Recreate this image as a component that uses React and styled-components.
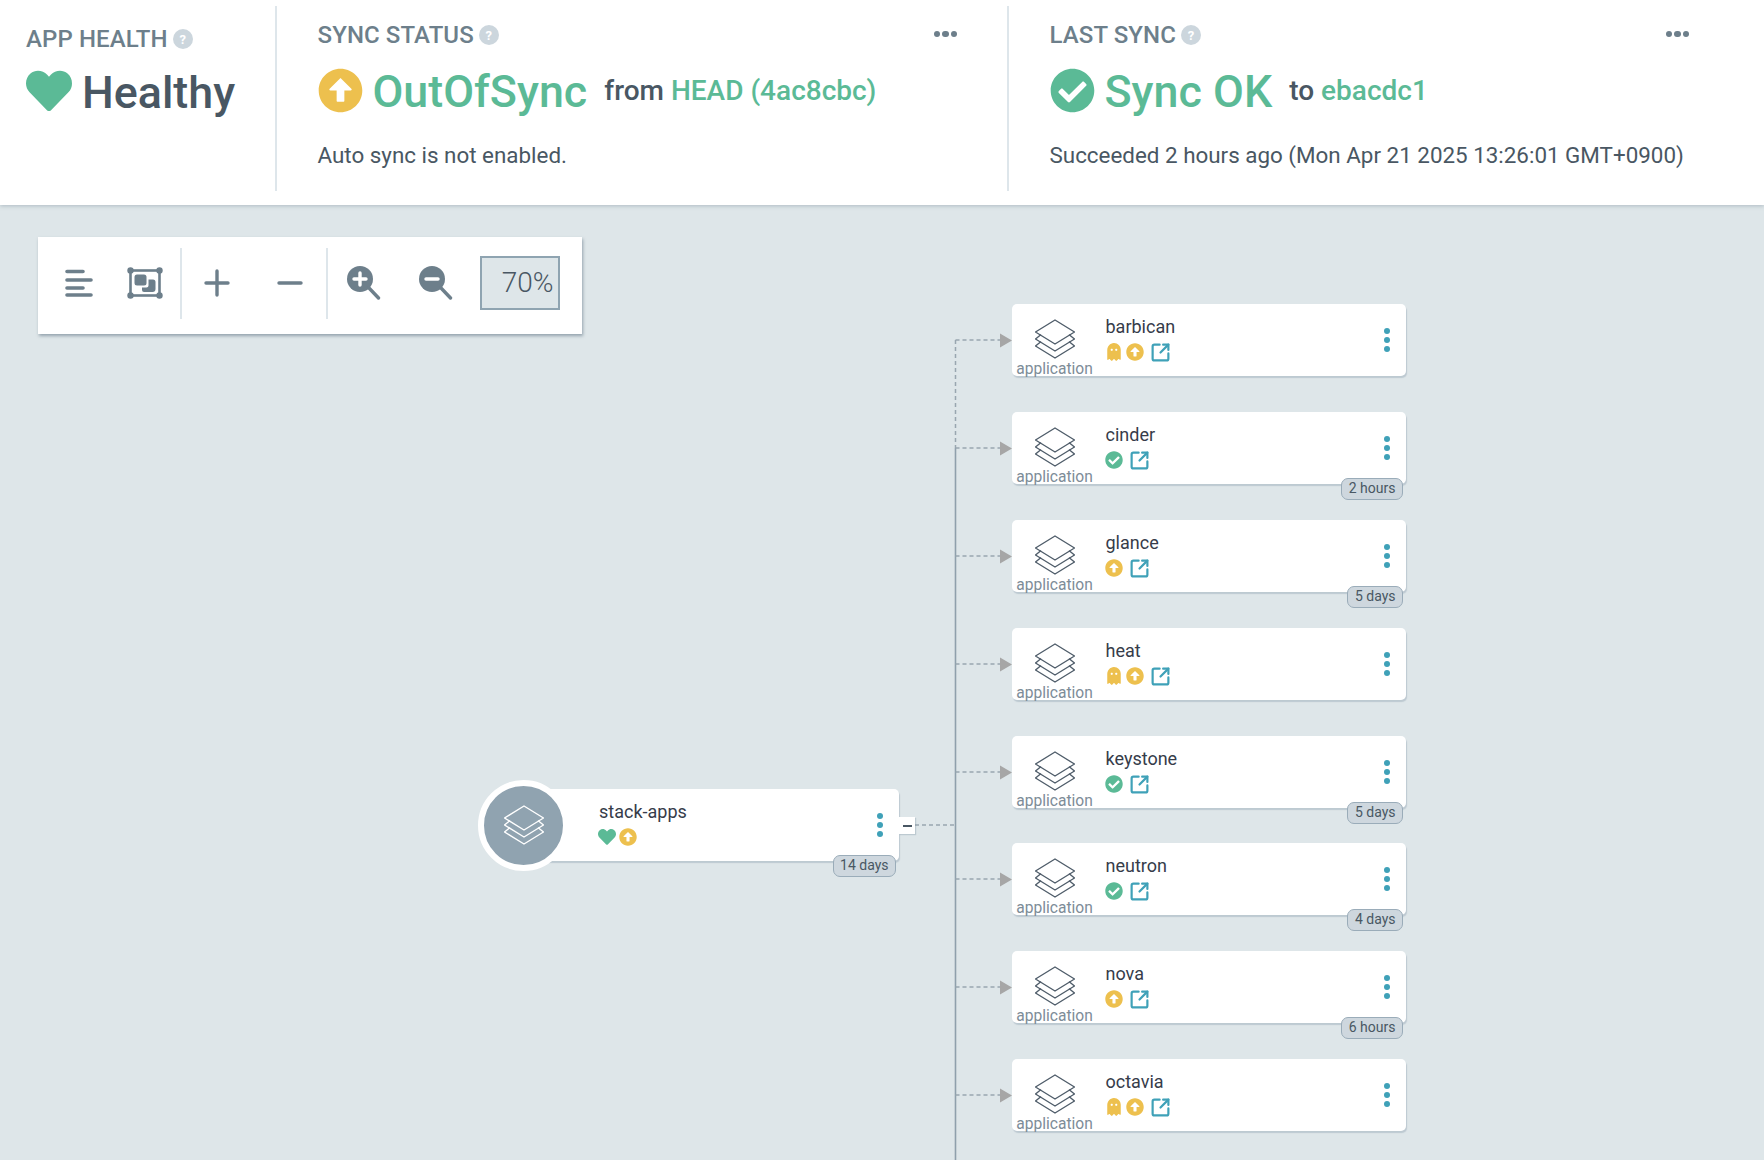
import React from 'react';
import styled, { createGlobalStyle } from 'styled-components';
import { FaHeart, FaArrowAltCircleUp, FaCheckCircle, FaGhost } from 'react-icons/fa';
import { SquareArrowOutUpRight } from 'lucide-react';

const GREEN = '#5bba96';
const YELLOW = '#edc04e';
const SLATE = '#495763';
const MUTED = '#6d7f8b';
const TEAL = '#3fa1b8';
const CANVAS = '#dee6e9';

const GlobalStyle = createGlobalStyle`
    html, body {
        margin: 0;
        padding: 0;
        height: 100%;
        overflow: hidden;
        background: ${CANVAS};
        font-family: Roboto, "Liberation Sans", sans-serif;
    }
    #root { height: 100%; }
`;

// node rows on the graph, tops are relative to the canvas
const APPS = [
    {name: 'barbican', top: 99, ghost: true, status: 'up'},
    {name: 'cinder', top: 207, status: 'ok', age: '2 hours'},
    {name: 'glance', top: 315, status: 'up', age: '5 days'},
    {name: 'heat', top: 423, ghost: true, status: 'up'},
    {name: 'keystone', top: 531, status: 'ok', age: '5 days'},
    {name: 'neutron', top: 638, status: 'ok', age: '4 days'},
    {name: 'nova', top: 746, status: 'up', age: '6 hours'},
    {name: 'octavia', top: 854, ghost: true, status: 'up'}
];

const StackIcon = ({color = '#4f5d6a', size = 40}) => (
    <svg width={size} height={size} viewBox="0 0 40 40" fill="none" stroke={color} strokeWidth="1.4" strokeLinejoin="round" strokeLinecap="round">
        <path d="M20 1 L39.5 13 L20 25 L.5 13 Z" />
        <path d="M5.5 16 L.5 20 L20 32 L39.5 20 L34.5 16" />
        <path d="M5.5 23 L.5 27 L20 39 L39.5 27 L34.5 23" />
    </svg>
);

const AlignIcon = () => (
    <svg width="28" height="28" viewBox="0 0 28 28" stroke={MUTED} strokeWidth="3.6" strokeLinecap="round">
        <path d="M2 2.5 H18 M2 11 H26 M2 19 H18 M2 26 H26" />
    </svg>
);

const FitIcon = () => (
    <svg width="36" height="32" viewBox="0 0 36 32" fill={MUTED}>
        <rect x="3.5" y="3.5" width="29" height="25" fill="none" stroke={MUTED} strokeWidth="2.6" />
        <circle cx="3.5" cy="3.5" r="3.2" />
        <circle cx="32.5" cy="3.5" r="3.2" />
        <circle cx="3.5" cy="28.5" r="3.2" />
        <circle cx="32.5" cy="28.5" r="3.2" />
        <rect x="7.5" y="7.5" width="12" height="11" rx="2.5" />
        <path d="M21.5 12.5 H26 Q28.5 12.5 28.5 15 V22 Q28.5 25 25.5 25 H17 Q15 25 15 23 V20.5 H19.5 Q21.5 20.5 21.5 18.5 Z" />
    </svg>
);

const PlusIcon = () => (
    <svg width="26" height="28" viewBox="0 0 26 28" stroke={MUTED} strokeWidth="3.4" strokeLinecap="round">
        <path d="M2 14 H24 M13 2 V26" />
    </svg>
);

const MinusIcon = () => (
    <svg width="26" height="28" viewBox="0 0 26 28" stroke={MUTED} strokeWidth="3.4" strokeLinecap="round">
        <path d="M2 14 H24" />
    </svg>
);

const ZoomIcon = ({plus}) => (
    <svg width="34" height="34" viewBox="0 0 34 34">
        <circle cx="13" cy="13" r="13" fill={MUTED} />
        <path d="M22 22 L31.5 32" stroke={MUTED} strokeWidth="3.4" strokeLinecap="round" />
        <path d={plus ? 'M7 13 H19 M13 7 V19' : 'M7 13 H19'} stroke="#fff" strokeWidth="3.4" strokeLinecap="round" />
    </svg>
);

const HelpBadge = () => <Help>?</Help>;

const Kebab = () => (
    <KebabWrap>
        <Dot />
        <Dot />
        <Dot />
    </KebabWrap>
);

const StatusIcon = ({status}) => (status === 'up'
    ? <FaArrowAltCircleUp size={18} color={YELLOW} />
    : <FaCheckCircle size={18} color={GREEN} />);

const AppNode = ({name, top, ghost, status, age}) => (
    <NodeCard style={{top}}>
        <TypeCol>
            <StackIcon />
            <TypeLabel>application</TypeLabel>
        </TypeCol>
        <NodeBody>
            <NodeName>{name}</NodeName>
            <NodeStatus>
                {ghost && <FaGhost size={18} color={YELLOW} />}
                <StatusIcon status={status} />
                <LinkIcon><SquareArrowOutUpRight size={21} strokeWidth={2.5} color={TEAL} /></LinkIcon>
            </NodeStatus>
        </NodeBody>
        <Kebab />
        {age && <AgeBadge>{age}</AgeBadge>}
    </NodeCard>
);

const Edges = () => (
    <EdgeLayer width="1764" height="955" viewBox="0 0 1764 955" fill="none">
        <path d="M955.5 243 V955" stroke="#8fa0ac" strokeWidth="1.6" />
        <path d="M955.5 135 V243" stroke="#99a6b0" strokeWidth="1.5" strokeDasharray="4 3" />
        <path d="M915 620 H955" stroke="#99a6b0" strokeWidth="1.5" strokeDasharray="4 3" />
        {APPS.map(app => (
            <g key={app.name}>
                <path d={`M955.5 ${app.top + 36} H1001`} stroke="#99a6b0" strokeWidth="1.5" strokeDasharray="4 3" />
                <path d={`M1000 ${app.top + 29.5} L1012 ${app.top + 36.5} L1000 ${app.top + 43.5} Z`} fill="#a6a6a6" />
            </g>
        ))}
    </EdgeLayer>
);

const App = () => (
    <Page>
        <GlobalStyle />
        <Header>
            <HealthSection>
                <LabelRow>
                    <Label>APP HEALTH <HelpBadge /></Label>
                </LabelRow>
                <BigRow $top={9}>
                    <FaHeart size={46} color={GREEN} />
                    <BigText>Healthy</BigText>
                </BigRow>
            </HealthSection>
            <Section $right={50}>
                <LabelRow>
                    <Label>SYNC STATUS <HelpBadge /></Label>
                    <MoreDots><i /><i /><i /></MoreDots>
                </LabelRow>
                <BigRow>
                    <FaArrowAltCircleUp size={45} color={YELLOW} />
                    <BigText $green>OutOfSync</BigText>
                    <Extra>from <Accent>HEAD (4ac8cbc)</Accent></Extra>
                </BigRow>
                <Desc>Auto sync is not enabled.</Desc>
            </Section>
            <Section $right={75} $grow>
                <LabelRow>
                    <Label>LAST SYNC <HelpBadge /></Label>
                    <MoreDots><i /><i /><i /></MoreDots>
                </LabelRow>
                <BigRow>
                    <FaCheckCircle size={45} color={GREEN} />
                    <BigText $green>Sync OK</BigText>
                    <Extra>to <Accent>ebacdc1</Accent></Extra>
                </BigRow>
                <Desc>Succeeded 2 hours ago (Mon Apr 21 2025 13:26:01 GMT+0900)</Desc>
            </Section>
        </Header>
        <Canvas>
            <Toolbar>
                <ToolButton $w={66}><AlignIcon /></ToolButton>
                <ToolButton $w={66}><FitIcon /></ToolButton>
                <ToolDivider />
                <ToolButton $w={71.5} $nudge={1}><PlusIcon /></ToolButton>
                <ToolButton $w={71.5} $nudge={4}><MinusIcon /></ToolButton>
                <ToolDivider />
                <ToolButton $nudge={2}><ZoomIcon plus /></ToolButton>
                <ToolButton $nudge={2}><ZoomIcon /></ToolButton>
                <ZoomValue>70%</ZoomValue>
            </Toolbar>
            <Edges />
            <RootNode>
                <RootCircle><StackIcon color="#fff" size={40} /></RootCircle>
                <RootBody>
                    <NodeName>stack-apps</NodeName>
                    <NodeStatus>
                        <FaHeart size={18} color={GREEN} />
                        <StatusIcon status="up" />
                    </NodeStatus>
                </RootBody>
                <Kebab />
                <AgeBadge>14 days</AgeBadge>
                <Collapse><span /></Collapse>
            </RootNode>
            {APPS.map(app => <AppNode key={app.name} {...app} />)}
        </Canvas>
    </Page>
);

const Page = styled.div`
    display: flex;
    flex-direction: column;
    height: 100vh;
    overflow: hidden;
`;

const Header = styled.header`
    display: flex;
    flex: none;
    height: 205px;
    box-sizing: border-box;
    padding: 6px 0 14px;
    background: #fff;
    box-shadow: 0 1px 4px rgba(90, 110, 125, 0.35);
    position: relative;
    z-index: 2;
`;

const Section = styled.section`
    box-sizing: border-box;
    width: ${p => (p.$grow ? 'auto' : '732px')};
    flex: ${p => (p.$grow ? 1 : 'none')};
    padding: 16px ${p => p.$right}px 0 40.5px;
    border-right: ${p => (p.$grow ? 'none' : '2px solid #dee6eb')};
`;

const HealthSection = styled.section`
    box-sizing: border-box;
    width: 277px;
    flex: none;
    padding: 20px 0 0 26px;
    border-right: 2px solid #dee6eb;
`;

const LabelRow = styled.div`
    display: flex;
    align-items: center;
    justify-content: space-between;
    height: 26px;
`;

const Label = styled.div`
    display: flex;
    align-items: center;
    gap: 5px;
    font-size: 24px;
    font-weight: 500;
    letter-spacing: 0.1px;
    color: ${MUTED};
`;

const Help = styled.span`
    display: inline-flex;
    align-items: center;
    justify-content: center;
    width: 20px;
    height: 20px;
    border-radius: 50%;
    background: #ccd6dd;
    color: #fff;
    font-size: 13px;
    font-weight: 700;
`;

const MoreDots = styled.div`
    display: flex;
    gap: 2px;
    margin-bottom: 2px;

    i {
        width: 6.5px;
        height: 6.5px;
        border-radius: 50%;
        background: ${MUTED};
    }
`;

const BigRow = styled.div`
    display: flex;
    align-items: center;
    gap: 10px;
    margin-top: ${p => p.$top || 12}px;
    height: 60px;
`;

const BigText = styled.span`
    padding-top: 3px;
    font-size: 44.8px;
    font-weight: 500;
    color: ${p => (p.$green ? GREEN : SLATE)};
`;

const Extra = styled.span`
    margin-left: 7px;
    font-size: 28px;
    font-weight: 500;
    color: ${SLATE};
`;

const Accent = styled.span`
    color: ${GREEN};
`;

const Desc = styled.div`
    margin-top: 21.5px;
    font-size: 22.4px;
    color: ${SLATE};
`;

const Canvas = styled.main`
    position: relative;
    flex: 1;
    padding: 32px 38px;
    background: ${CANVAS};
`;

const Toolbar = styled.div`
    position: relative;
    z-index: 1;
    display: flex;
    align-items: center;
    box-sizing: border-box;
    width: fit-content;
    height: 97px;
    padding: 0 22px 5px 8px;
    background: #fff;
    box-shadow: 1px 2px 3px rgba(90, 110, 125, 0.55);
`;

const ToolButton = styled.div`
    display: flex;
    align-items: center;
    justify-content: center;
    box-sizing: border-box;
    width: ${p => p.$w || 72}px;
    padding-left: ${p => p.$nudge || 0}px;
`;

const ToolDivider = styled.div`
    width: 2px;
    height: 71px;
    margin-left: 2px;
    background: #dee6eb;

    & + div { margin-left: -1px; }
`;

const ZoomValue = styled.div`
    box-sizing: border-box;
    width: 80px;
    height: 54px;
    margin-left: 8.5px;
    padding-right: 4px;
    border: 2.5px solid #8fa4b1;
    background: ${CANVAS};
    color: ${SLATE};
    font-size: 28px;
    font-weight: 300;
    line-height: 50px;
    text-align: right;
`;

const EdgeLayer = styled.svg`
    position: absolute;
    top: 0;
    left: 0;
`;

const NodeCard = styled.div`
    position: absolute;
    left: 1011.5px;
    display: flex;
    align-items: stretch;
    width: 394.5px;
    height: 72px;
    border-radius: 5px;
    background: #fff;
    box-shadow: 1px 2px 1px rgba(130, 150, 165, 0.35);
`;

const TypeCol = styled.div`
    display: flex;
    flex-direction: column;
    align-items: center;
    flex: none;
    width: 86px;
    padding-top: 14.5px;
    margin-right: 8px;

    svg { flex: none; }
`;

const TypeLabel = styled.span`
    flex: none;
    margin-top: 1px;
    font-size: 15.6px;
    line-height: 18px;
    color: #7d8c98;
    white-space: nowrap;
`;

const NodeBody = styled.div`
    flex: 1;
    padding-top: 12px;
`;

const NodeName = styled.div`
    font-size: 18px;
    line-height: 22px;
    color: #363c4a;
`;

const NodeStatus = styled.div`
    display: flex;
    align-items: center;
    gap: 3px;
    height: 22px;
    margin: 3px 0 0 -1px;
`;

const LinkIcon = styled.span`
    display: flex;
    margin-left: 3px;
`;

const KebabWrap = styled.div`
    display: flex;
    flex-direction: column;
    justify-content: center;
    gap: 3px;
    flex: none;
    width: 38px;
    align-items: center;
`;

const Dot = styled.span`
    width: 6px;
    height: 6px;
    border-radius: 50%;
    background: ${TEAL};
`;

const AgeBadge = styled.div`
    position: absolute;
    right: 3px;
    bottom: -15.5px;
    box-sizing: border-box;
    height: 22px;
    padding: 0 6.5px;
    border: 1.5px solid #9aacb9;
    border-radius: 7px;
    background: #ced7de;
    color: ${SLATE};
    font-size: 14px;
    line-height: 19px;
`;

const RootNode = styled(NodeCard)`
    left: 523px;
    top: 584px;
    width: 376px;
`;

const RootCircle = styled.div`
    position: absolute;
    left: -45px;
    top: -9.5px;
    display: flex;
    align-items: center;
    justify-content: center;
    box-sizing: border-box;
    width: 91px;
    height: 91px;
    border: 6px solid #fff;
    border-radius: 50%;
    background: #90a3b0;
`;

const RootBody = styled(NodeBody)`
    padding-left: 76px;
`;

const Collapse = styled.div`
    position: absolute;
    right: -16px;
    top: 28px;
    display: flex;
    align-items: center;
    justify-content: center;
    width: 16px;
    height: 17px;
    background: #fff;
    box-shadow: 1px 1px 1px rgba(130, 150, 165, 0.35);

    span {
        width: 9px;
        height: 2px;
        background: ${SLATE};
    }
`;

export default App;
